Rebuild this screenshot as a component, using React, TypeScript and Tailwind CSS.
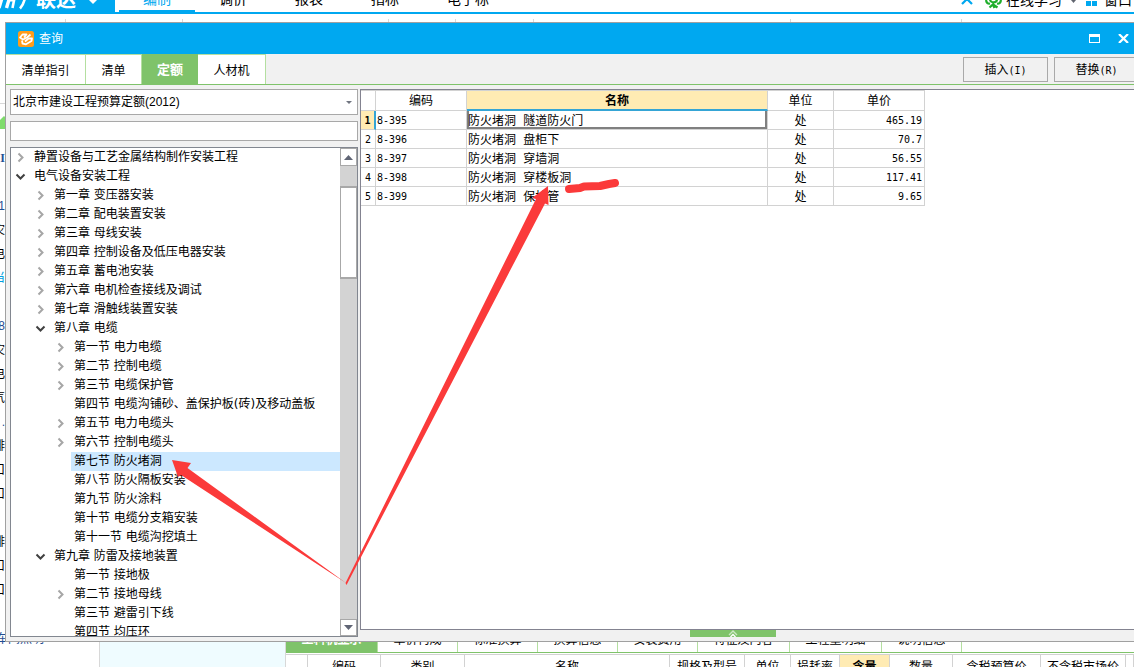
import React from "react";

type Node = { level: 0 | 1 | 2; label: string; state?: "open" | "closed"; selected?: boolean };

const nodes: Node[] = [
  { level: 0, label: "静置设备与工艺金属结构制作安装工程", state: "closed" },
  { level: 0, label: "电气设备安装工程", state: "open" },
  { level: 1, label: "第一章 变压器安装", state: "closed" },
  { level: 1, label: "第二章 配电装置安装", state: "closed" },
  { level: 1, label: "第三章 母线安装", state: "closed" },
  { level: 1, label: "第四章 控制设备及低压电器安装", state: "closed" },
  { level: 1, label: "第五章 蓄电池安装", state: "closed" },
  { level: 1, label: "第六章 电机检查接线及调试", state: "closed" },
  { level: 1, label: "第七章 滑触线装置安装", state: "closed" },
  { level: 1, label: "第八章 电缆", state: "open" },
  { level: 2, label: "第一节 电力电缆", state: "closed" },
  { level: 2, label: "第二节 控制电缆", state: "closed" },
  { level: 2, label: "第三节 电缆保护管", state: "closed" },
  { level: 2, label: "第四节 电缆沟铺砂、盖保护板(砖)及移动盖板" },
  { level: 2, label: "第五节 电力电缆头", state: "closed" },
  { level: 2, label: "第六节 控制电缆头", state: "closed" },
  { level: 2, label: "第七节 防火堵洞", selected: true },
  { level: 2, label: "第八节 防火隔板安装" },
  { level: 2, label: "第九节 防火涂料" },
  { level: 2, label: "第十节 电缆分支箱安装" },
  { level: 2, label: "第十一节 电缆沟挖填土" },
  { level: 1, label: "第九章 防雷及接地装置", state: "open" },
  { level: 2, label: "第一节 接地极" },
  { level: 2, label: "第二节 接地母线", state: "closed" },
  { level: 2, label: "第三节 避雷引下线" },
  { level: 2, label: "第四节 均压环" },
];

const indent = { 0: "pl-0", 1: "pl-5", 2: "pl-10" };

const rows = [
  { code: "8-395", name: "防火堵洞 隧道防火门", unit: "处", price: "465.19" },
  { code: "8-396", name: "防火堵洞 盘柜下", unit: "处", price: "70.7" },
  { code: "8-397", name: "防火堵洞 穿墙洞", unit: "处", price: "56.55" },
  { code: "8-398", name: "防火堵洞 穿楼板洞", unit: "处", price: "117.41" },
  { code: "8-399", name: "防火堵洞 保护管", unit: "处", price: "9.65" },
];

const margin = [
  { text: "I", tone: "font-['Liberation_Serif',serif] font-bold text-[#1f4e93]" },
  { text: "", tone: "" },
  { text: "1", tone: "text-[#1f4e93]" },
  { text: "灾", tone: "" },
  { text: "电", tone: "" },
  { text: "当", tone: "text-[#00a0e0]" },
  { text: "", tone: "" },
  { text: "8", tone: "text-[#1f4e93]" },
  { text: "灾", tone: "" },
  { text: "电", tone: "" },
  { text: "气", tone: "" },
  { text: ".", tone: "text-[#1f4e93]" },
  { text: "排", tone: "" },
  { text: "口", tone: "" },
  { text: "口", tone: "" },
  { text: "", tone: "" },
  { text: "排", tone: "" },
  { text: "口", tone: "" },
  { text: "口", tone: "" },
];

const toolGroups = ["w-[66px]", "w-[117px]", "w-[206px]", "w-[67px]", "w-[78px]", "w-[257px]", "w-[171px]"];

const detailTabs = [
  { label: "工料机显示", width: "w-[92px]" },
  { label: "单价构成", width: "w-20" },
  { label: "标准换算", width: "w-20" },
  { label: "换算信息", width: "w-20" },
  { label: "安装费用", width: "w-20" },
  { label: "特征及内容", width: "w-[92px]" },
  { label: "工程量明细", width: "w-[92px]" },
  { label: "说明信息", width: "w-20" },
];

const detailColumns = [
  { label: "", width: "w-[22px]" },
  { label: "编码", width: "w-[73px]" },
  { label: "类别", width: "w-[84px]" },
  { label: "名称", width: "w-[205px]" },
  { label: "规格及型号", width: "w-[75px]" },
  { label: "单位", width: "w-[46px]" },
  { label: "损耗率", width: "w-[49px]" },
  { label: "含量", width: "w-[50px]" },
  { label: "数量", width: "w-[63px]" },
  { label: "含税预算价", width: "w-[88px]" },
  { label: "不含税市场价", width: "w-[85px]" },
  { label: "", width: "" },
];

function Chevron({ open }: { open: boolean }) {
  return open ? (
    <svg width="11" height="11" viewBox="0 0 11 11" fill="none" stroke="#404040" strokeWidth="2">
      <path d="M1.5 3.5 5.5 7.5 9.5 3.5" />
    </svg>
  ) : (
    <svg width="11" height="11" viewBox="0 0 11 11" fill="none" stroke="#a6a6a6" strokeWidth="2">
      <path d="M3.5 1.5 7.5 5.5 3.5 9.5" />
    </svg>
  );
}

function Ribbon() {
  return (
    <header className="flex h-[14px] shrink-0 items-end overflow-hidden border-b-2 border-[#00a8f0] text-sm">
      <div className="flex h-3 w-[115px] items-end bg-[#00a8f0] text-white">
        <svg width="36" height="12" viewBox="0 0 36 12" fill="none" stroke="#fff" strokeWidth="3.4">
          <path d="M-1 8 2 -2M6.5 8 9.5 -2" />
          <path d="M9 0.500H14" strokeWidth="2" />
          <path d="M12.500 8 14.500 -2" strokeWidth="2.6" />
          <path d="M20 8.500C23.500 5 24 2 25 -2" strokeWidth="2.6" />
        </svg>
        <span className="pb-0.5 text-xl leading-5 font-bold">联达</span>
        <svg className="ml-3 self-start" width="10" height="5" viewBox="0 0 10 5" fill="#fff">
          <path d="M1 0H9L5 4Z" />
        </svg>
      </div>
      <nav className="flex items-end pl-1">
        <a href="#edit" className="flex h-8 w-[76px] items-end justify-center border-b-2 border-[#00a8f0] pb-px leading-5 text-[#00a8f0]">编制</a>
        <a href="#adjust" className="w-[76px] pb-[3px] text-center leading-5">调价</a>
        <a href="#report" className="w-[76px] pb-[3px] text-center leading-5">报表</a>
        <a href="#index" className="w-[76px] pb-[3px] text-center leading-5">指标</a>
        <a href="#ebid" className="w-[90px] pb-[3px] text-center leading-5">电子标</a>
      </nav>
      <div className="ml-auto flex items-end pr-0.5">
        <svg className="mr-3" width="12" height="12" viewBox="0 0 12 12" fill="none" stroke="#00a8f0" strokeWidth="2.2">
          <path d="M1 4 6 -1 11 4" />
        </svg>
        <svg className="mr-1" width="17" height="12" viewBox="0 0 17 12" fill="none" stroke="#1fae2b" strokeWidth="2.2">
          <path d="M1 0C1.500 3 3 4 5 3.500M16 0C15.500 3 14 4 12 3.500M5 -1C5 3.500 12 3.500 12 -1M4.500 7.500 8 4.500 12.500 7.500M8 4 9.500 8" />
        </svg>
        <span className="pb-0.5 leading-5">在线学习</span>
        <svg className="mx-2" width="8" height="12" viewBox="0 0 8 12" fill="#60656f">
          <path d="M1 0H6L3.500 3Z" />
        </svg>
        <svg className="mr-1.5" width="12" height="12" viewBox="0 0 12 12" fill="#00a8f0">
          <path d="M0 1h5v5H0zM6 1h5v5H6z" />
        </svg>
        <span className="pb-0.5 leading-5">窗口</span>
      </div>
    </header>
  );
}

function Toolbar() {
  return (
    <div className="flex h-[90px] shrink-0 border-b border-[#d8d8d8] pt-[5px]">
      {toolGroups.map((w) => (
        <div key={w} className={`${w} shrink-0 border-r border-[#d8d8d8]`} />
      ))}
    </div>
  );
}

function Workspace() {
  return (
    <div className="flex min-h-0 flex-1">
      <aside className="flex w-[100px] shrink-0 flex-col border-r border-[#d8d8d8]">
        <div className="h-[42px] shrink-0 pt-3">
          <svg width="6" height="14" viewBox="0 0 6 14" fill="#7fdc6c">
            <path d="M0 4 4 0 6 2V13H0Z" />
          </svg>
        </div>
        {margin.map((m, i) => (
          <div key={i} className="flex h-6 w-[5px] shrink-0 items-center justify-end">
            <span className={`whitespace-nowrap ${m.tone}`}>{m.text}</span>
          </div>
        ))}
        <div className="flex-1" />
        <a href="#lighting" className="-ml-1 pb-5 leading-4 whitespace-nowrap text-[#1f4e93]">车间照明</a>
      </aside>
      <div className="w-[186px] shrink-0 border-r border-[#d8d8d8] bg-[#effcff]" />
      <main className="flex min-w-0 flex-1 flex-col justify-end">
        <div className="h-10 shrink-0">
          <div className="flex h-[26px] border-b border-[#7fc36a]">
            {detailTabs.map((t, i) => (
              <button
                key={t.label}
                className={`${t.width} border-r border-[#b4dfa0] text-center leading-[26px] ${i === 0 ? "bg-[#7fc36a] font-bold text-white" : ""}`}
              >
                {t.label}
              </button>
            ))}
          </div>
          <table className="mt-px w-full table-fixed border-separate border-spacing-0 border-t border-[#d2d2d2]">
            <thead>
              <tr>
                {detailColumns.map((c, i) => (
                  <th
                    key={i}
                    className={`${c.width} h-6 border-r border-[#d2d2d2] p-0 whitespace-nowrap ${c.label === "含量" ? "bg-[#ffebb3] font-bold" : "font-normal"}`}
                  >
                    {c.label}
                  </th>
                ))}
              </tr>
            </thead>
          </table>
        </div>
      </main>
    </div>
  );
}

function Catalogue() {
  return (
    <section className="flex w-[348px] shrink-0 flex-col">
      <div className="relative">
        <select
          aria-label="定额库"
          className="block h-[26px] w-full appearance-none rounded-none border border-[#a8a8a8] bg-white pl-0.5 text-xs outline-none"
        >
          <option>北京市建设工程预算定额(2012)</option>
        </select>
        <svg className="pointer-events-none absolute top-3 right-1.5" width="6" height="4" viewBox="0 0 6 4" fill="#707580">
          <path d="M0 0H6L3 3Z" />
        </svg>
      </div>
      <input aria-label="搜索" className="mt-1.5 h-5 w-full border border-[#a8a8a8] bg-white px-1 outline-none" />
      <div className="mt-1.5 flex min-h-0 flex-1 border border-[#828790] bg-white">
        <ul role="tree" className="min-w-0 flex-1 overflow-hidden font-['DejaVu_Sans','Noto_Sans_CJK_SC',sans-serif]">
          {nodes.map((n) => (
            <li key={n.label} role="treeitem" aria-selected={!!n.selected} className={`flex h-[19px] ${indent[n.level]}`}>
              <span className="flex w-5 shrink-0 items-center justify-center pr-0.5">{n.state && <Chevron open={n.state === "open"} />}</span>
              <span className={`flex-1 pl-[3px] leading-[19px] whitespace-nowrap ${n.selected ? "bg-[#cce8ff]" : ""}`}>{n.label}</span>
            </li>
          ))}
        </ul>
        <div className="flex w-[17px] shrink-0 flex-col bg-[#d3d3d3]">
          <button aria-label="向上" className="flex h-[18px] items-center justify-center border border-[#a8a8a8] bg-white">
            <svg width="9" height="5" viewBox="0 0 9 5" fill="#606575"><path d="M4.500 0 9 5H0Z" /></svg>
          </button>
          <div className="mt-5 h-[93px] border-x border-y-2 border-[#a8a8a8] bg-white" />
          <button aria-label="向下" className="mt-auto flex h-[17px] items-center justify-center border border-[#a8a8a8] bg-white">
            <svg width="9" height="5" viewBox="0 0 9 5" fill="#606575"><path d="M0 0H9L4.500 5Z" /></svg>
          </button>
        </div>
      </div>
    </section>
  );
}

function Quota() {
  const head = "h-5 border-r border-b border-[#d2d2d2] p-0 pt-px font-normal";
  const line = "h-[19px] border-r border-b border-[#d2d2d2]";
  const cell = `${line} p-0 pt-0.5`;
  const num = "font-['DejaVu_Sans_Mono',monospace] text-[10px]";
  const name = "p-0 pt-1 pl-px leading-[14px] font-['Liberation_Mono','Noto_Sans_CJK_SC',monospace]";
  return (
    <section className="flex min-w-0 flex-1 flex-col">
      <div className="flex-1 border border-[#838390] bg-white">
        <table className="w-[564px] table-fixed border-separate border-spacing-0 border-t border-[#d2d2d2] leading-4">
          <thead>
            <tr>
              <th className={`${head} w-[15px]`} />
              <th className={`${head} w-[91px]`}>编码</th>
              <th className="h-5 w-[301px] border-r border-b-2 border-r-[#d2d2d2] border-b-[#35a5d5] bg-[#ffebb3] p-0 pt-0.5 font-bold">名称</th>
              <th className={`${head} w-[66px]`}>单位</th>
              <th className={`${head} w-[91px]`}>单价</th>
            </tr>
          </thead>
          <tbody>
            {rows.map((r, i) => (
              <tr key={r.code}>
                <td
                  className={
                    i === 0
                      ? "h-[19px] border-r-2 border-b border-r-[#35a5d5] border-b-[#d2d2d2] bg-[#ffebb3] p-0 pt-0.5 text-center font-['DejaVu_Sans_Mono',monospace] text-[10px] font-bold"
                      : `${cell} ${num} text-center`
                  }
                >
                  {i + 1}
                </td>
                <td className={`${cell} ${num} pl-px`}>{r.code}</td>
                <td className={`${line} ${name} ${i === 0 ? "shadow-[inset_2px_0_#808080,inset_-2px_-2px_#808080]" : ""}`}>{r.name}</td>
                <td className={`${cell} text-center`}>{r.unit}</td>
                <td className={`${cell} ${num} pr-0.5 text-right`}>{r.price}</td>
              </tr>
            ))}
          </tbody>
        </table>
      </div>
      <div className="flex h-[7px] shrink-0 pl-[330px]">
        <button aria-label="展开" className="flex w-[86px] justify-center bg-[#7fc36a]">
          <svg width="10" height="7" viewBox="0 0 10 7" fill="none" stroke="#fff" strokeWidth="1.4">
            <path d="M1 5 5 1 9 5" opacity=".6" />
            <path d="M2.500 7 5 4.500 7.500 7" />
          </svg>
        </button>
      </div>
    </section>
  );
}

function QueryWindow() {
  const tab = "border-t border-r border-[#b4dfa0] bg-white pt-0.5 text-center";
  const action = "h-[25px] w-[85px] border border-[#a9a9a9] bg-[#f1f1f1] pt-px";
  const key = "font-['DejaVu_Sans_Mono',monospace] text-[10px]";
  return (
    <div role="dialog" aria-label="查询" className="absolute top-[22px] -right-2.5 bottom-[25px] left-[5px] flex flex-col border border-[#a0a0a0] bg-[#f1f1f1]">
      <div className="flex h-[31px] shrink-0 items-center bg-[#00a8f0] pr-3.5 pl-3 text-white">
        <svg width="16" height="16" viewBox="0 0 16 16">
          <rect width="16" height="16" rx="2.500" fill="#ff9c1a" />
          <g fill="none" stroke="#fff" strokeWidth="1.800" strokeLinejoin="round">
            <path d="M6 6.500 8.500 3.500 4.500 3.500 2 6.500 5 8.500 9 6.500 12.500 3.500" />
            <path d="M4 9.500 4.500 12.500 8 13.300 13.500 10 14 7.500 10.500 7.500 7 10.500" />
          </g>
        </svg>
        <h1 className="ml-[5px] flex-1">查询</h1>
        <button aria-label="最大化" className="h-[9px] w-[11px] border border-t-[3px] border-white" />
        <button aria-label="关闭" className="ml-[18px]">
          <svg width="11" height="9" viewBox="0 0 11 9" fill="none" stroke="#fff" strokeWidth="2.200">
            <path d="M1 0 10 9M10 0 1 9" />
          </svg>
        </button>
      </div>
      <div className="flex h-[31px] shrink-0 border-b border-[#7fc36a] pr-1">
        <button className={`${tab} w-20`}>清单指引</button>
        <button className={`${tab} w-14`}>清单</button>
        <button className="w-14 bg-[#7fc36a] pt-0.5 text-[13px] font-bold text-white">定额</button>
        <button className={`${tab} w-[68px]`}>人材机</button>
        <div className="ml-auto flex items-center gap-1.5">
          <button className={action}>插入<span className={key}>(I)</span></button>
          <button className={action}>替换<span className={key}>(R)</span></button>
        </div>
      </div>
      <div className="flex min-h-0 flex-1 gap-0.5 p-1">
        <Catalogue />
        <Quota />
      </div>
    </div>
  );
}

function Annotations() {
  return (
    <svg className="pointer-events-none absolute top-0 left-0" width="1134" height="667" viewBox="0 0 1134 667" fill="#fb3a3a">
      <path d="M172 460 191 463 187.500 468 346 583 181 475 178 477Z" />
      <path d="M548 186 548.500 205 545 203.500 346.500 585 345.500 583 536 199 532 198Z" />
      <path d="M569 189 580 188 584 186.500 600 186 609 184 615 183" fill="none" stroke="#fb3a3a" strokeWidth="8" strokeLinecap="round" strokeLinejoin="round" />
    </svg>
  );
}

export default function App() {
  return (
    <div className="relative flex h-screen flex-col overflow-hidden bg-white font-['Liberation_Sans','Noto_Sans_CJK_SC',sans-serif] text-xs text-black">
      <Ribbon />
      <Toolbar />
      <Workspace />
      <QueryWindow />
      <Annotations />
    </div>
  );
}
